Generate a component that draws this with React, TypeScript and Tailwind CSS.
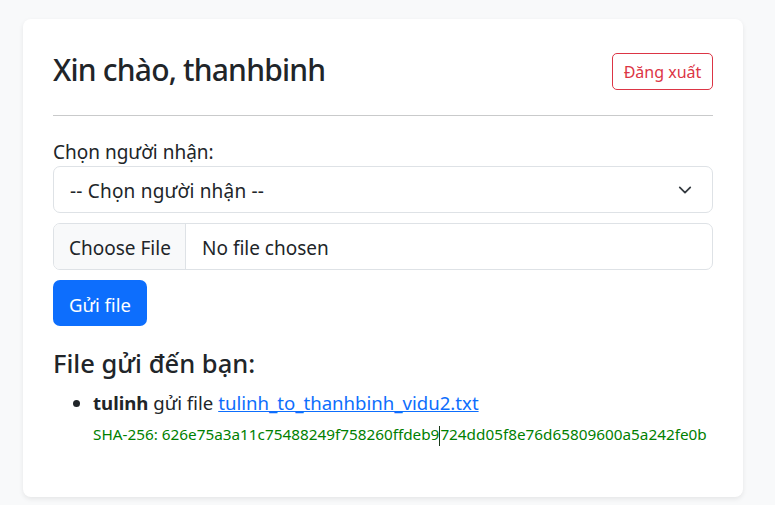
import React from "react";

export default function App() {
  return (
    <div
      className="min-h-screen bg-[#f8f9fa] pt-[19px] pl-[23px] text-[#212529]"
      style={{ fontFamily: '"Noto Sans", "Open Sans", sans-serif' }}
    >
      <div className="w-[720px] h-[478px] bg-white rounded-lg shadow-[0_2px_5px_rgba(0,0,0,0.08)] px-[30px] pt-[34px]">
        <div className="flex items-center justify-between h-[37px]">
          <h3 className="text-[30px] font-medium leading-none tracking-[-0.8px] -mt-[3px]">Xin chào, thanhbinh</h3>
          <button className="h-[37px] w-[101px] border border-[#dc3545] text-[#dc3545] rounded-[5px] text-[16px] leading-none">
            Đăng xuất
          </button>
        </div>
        <div className="mt-[25px] border-t border-[#c9cacb]" />
        <div className="mt-[23px] text-[19px] leading-[27px] h-[27px]">Chọn người nhận:</div>
        <div className="h-[47px] border border-[#dee2e6] rounded-[7px] flex items-center justify-between pl-[16px] pr-[20px] text-[19px] tracking-[0.2px]">
          <span className="pt-[3px]">-- Chọn người nhận --</span>
          <svg width="14" height="14" viewBox="0 0 16 16" fill="none" stroke="#343a40" strokeWidth="2" strokeLinecap="round" strokeLinejoin="round">
            <path d="M2 5l6 6 6-6" />
          </svg>
        </div>
        <div className="mt-[10px] h-[47px] border border-[#dee2e6] rounded-[7px] flex items-stretch overflow-hidden text-[19px]">
          <div className="w-[132px] bg-[#f8f9fa] border-r border-[#dee2e6] flex items-center pl-[15px] pt-[3px]">Choose File</div>
          <div className="flex items-center pl-[16px] pt-[3px]">No file chosen</div>
        </div>
        <button className="mt-[10px] h-[46px] w-[94px] bg-[#0d6efd] text-white rounded-[7px] text-[18.5px] pt-[3px]">Gửi file</button>
        <h4 className="mt-[20px] text-[25.5px] font-medium leading-[34px]">File gửi đến bạn:</h4>
        <ul className="list-disc pl-[40px] mt-[9px] text-[18.6px] leading-[28px]">
          <li>
            <b className="font-bold">tulinh</b> gửi file{" "}
            <a href="#" className="text-[#0d6efd] underline">tulinh_to_thanhbinh_vidu2.txt</a>
            <div className="mt-[6px] text-[15.3px] leading-[22px] text-[#008000]">
              SHA-256: 626e75a3a11c75488249f758260ffdeb9
              <span className="inline-block w-px h-[20px] bg-[#1a3a1a] align-middle" />
              724dd05f8e76d65809600a5a242fe0b
            </div>
          </li>
        </ul>
      </div>
    </div>
  );
}
